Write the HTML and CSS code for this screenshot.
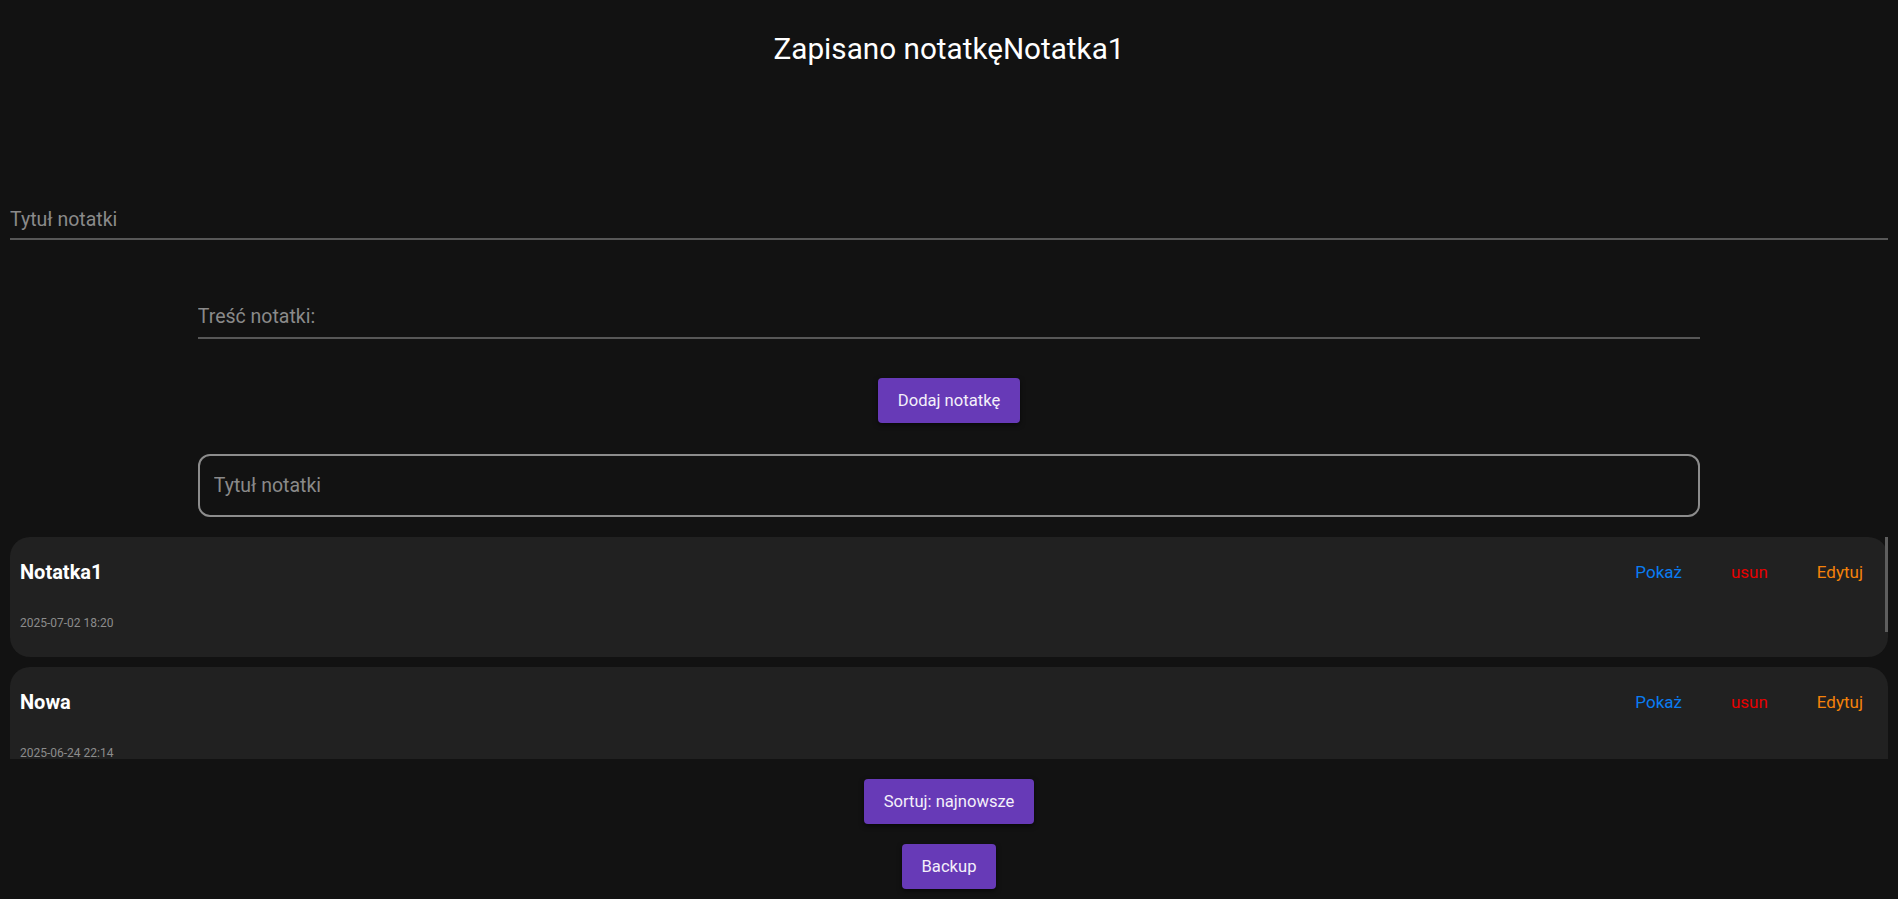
FILE: index.html
```html
<!DOCTYPE html>
<html lang="pl">
<head>
<meta charset="utf-8">
<title>Notatki</title>
<link rel="stylesheet" href="styles.css">
</head>
<body>
<div class="app">
  <h1 class="toast">Zapisano notatkęNotatka1</h1>
  <input class="title-input" type="text" placeholder="Tytuł notatki">
  <input class="content-input" type="text" placeholder="Treść notatki:">
  <button class="btn btn-add">Dodaj notatkę</button>
  <input class="search-input" type="text" placeholder="Tytuł notatki">
  <div class="list-wrap">
    <div class="note-list">
      <div class="note">
        <div class="note-row">
          <span class="note-title">Notatka1</span>
          <div class="note-actions">
            <button class="link link-show">Pokaż</button>
            <button class="link link-delete">usun</button>
            <button class="link link-edit">Edytuj</button>
          </div>
        </div>
        <div class="note-date">2025-07-02 18:20</div>
      </div>
      <div class="note">
        <div class="note-row">
          <span class="note-title">Nowa</span>
          <div class="note-actions">
            <button class="link link-show">Pokaż</button>
            <button class="link link-delete">usun</button>
            <button class="link link-edit">Edytuj</button>
          </div>
        </div>
        <div class="note-date">2025-06-24 22:14</div>
      </div>
      <div class="note">
        <div class="note-row">
          <span class="note-title">Zakupy</span>
          <div class="note-actions">
            <button class="link link-show">Pokaż</button>
            <button class="link link-delete">usun</button>
            <button class="link link-edit">Edytuj</button>
          </div>
        </div>
        <div class="note-date">2025-06-20 09:41</div>
      </div>
      <div class="note">
        <div class="note-row">
          <span class="note-title">Test</span>
          <div class="note-actions">
            <button class="link link-show">Pokaż</button>
            <button class="link link-delete">usun</button>
            <button class="link link-edit">Edytuj</button>
          </div>
        </div>
        <div class="note-date">2025-06-18 17:05</div>
      </div>
    </div>
    <div class="scroll-thumb"></div>
  </div>
  <button class="btn btn-sort">Sortuj: najnowsze</button>
  <button class="btn btn-backup">Backup</button>
</div>
</body>
</html>
```

FILE: styles.css
```css
html, body {
  margin: 0;
  padding: 0;
  background: #121212;
  color: #ffffff;
  font-family: Roboto, "Liberation Sans", sans-serif;
}

.app {
  display: flex;
  flex-direction: column;
  align-items: center;
  padding: 0 10px;
  height: 899px;
  box-sizing: border-box;
  overflow: hidden;
}

.toast {
  margin: 0;
  padding-top: 31px;
  font-size: 29.7px;
  line-height: 36px;
  font-weight: 400;
  color: #ffffff;
  text-align: center;
}

input {
  font-family: Roboto, "Liberation Sans", sans-serif;
  font-size: 19.5px;
  color: #ffffff;
  background: transparent;
  outline: none;
  box-sizing: border-box;
}

input::placeholder {
  color: #8a8a8a;
}

.title-input {
  margin-top: 133px;
  width: 100%;
  height: 40px;
  border: none;
  border-bottom: 2px solid #575757;
  padding: 0;
}

.content-input {
  margin-top: 56px;
  width: 80%;
  height: 43px;
  border: none;
  border-bottom: 2px solid #575757;
  padding: 0;
}

.search-input {
  margin-top: 31px;
  width: 80%;
  height: 63px;
  border: 2px solid #8c8c8c;
  border-radius: 12px;
  padding: 0 14px;
}

.btn {
  height: 45px;
  padding: 0 20px;
  border: none;
  border-radius: 4px;
  background: #673ab7;
  color: #f4f0fa;
  font-family: Roboto, "Liberation Sans", sans-serif;
  font-size: 16.6px;
  box-shadow: 0 2px 5px rgba(0, 0, 0, 0.55);
  cursor: pointer;
}

.btn-add {
  margin-top: 39px;
}

.btn-sort {
  margin-top: 20px;
}

.btn-backup {
  margin-top: 20px;
}

.list-wrap {
  position: relative;
  margin-top: 20px;
  width: 100%;
  height: 222px;
}

.note-list {
  height: 100%;
  overflow-y: auto;
  scrollbar-width: none;
}

.note-list::-webkit-scrollbar {
  display: none;
}

.scroll-thumb {
  position: absolute;
  top: 0;
  right: 0;
  width: 3px;
  height: 95px;
  background: #5e5e5e;
}

.note {
  height: 120px;
  box-sizing: border-box;
  margin-bottom: 10px;
  padding: 23px 9px 0 10px;
  background: #212121;
  border-radius: 20px;
}

.note-row {
  display: flex;
  justify-content: space-between;
  align-items: center;
  height: 24px;
}

.note-title {
  font-size: 20px;
  line-height: 24px;
  font-weight: 700;
  color: #ffffff;
}

.note-actions {
  display: flex;
  gap: 17px;
}

.link {
  background: none;
  border: none;
  padding: 0 16px;
  font-family: Roboto, "Liberation Sans", sans-serif;
  font-size: 17px;
  line-height: 24px;
  cursor: pointer;
}

.link-show {
  color: #0a7cf2;
}

.link-delete {
  color: #e80000;
}

.link-edit {
  color: #f5820a;
}

.note-date {
  margin-top: 32px;
  font-size: 12px;
  line-height: 14px;
  color: #8c8c8c;
}
```
